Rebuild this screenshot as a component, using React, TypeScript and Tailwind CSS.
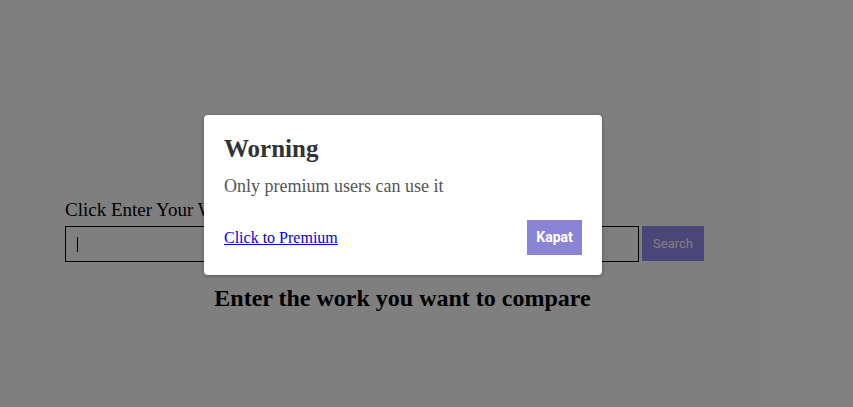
export default function App() {
  return (
    <div className="relative h-[407px] w-full overflow-hidden bg-white font-['Liberation_Serif',serif] text-black">
      <main className="w-[740px] pl-[65px] pt-[199px]">
        <label htmlFor="work" className="block text-[19px] leading-[22px]">
          Click Enter Your Work Name
        </label>
        <div className="mt-[5px] flex gap-[3px]">
          <div className="flex h-[36px] w-[574px] shrink-0 items-center border border-black pl-[11px]">
            <span className="h-[15px] w-px bg-black" />
          </div>
          <button className="h-[35px] w-[62px] shrink-0 bg-[#968cf0] font-['Roboto',sans-serif] text-[13px] text-white">
            Search
          </button>
        </div>
        <h2 className="mt-[22px] text-center text-[24px] font-bold leading-[28px]">
          Enter the work you want to compare
        </h2>
      </main>

      {/* modal overlay */}
      <div className="absolute inset-0 bg-black/50" />
      <div className="absolute left-[204px] top-[115px] flex w-[398px] flex-col rounded-[4px] bg-white px-[20px] pb-[20px] pt-[19px] shadow-[0_1px_4px_rgba(0,0,0,0.3)]">
        <h3 className="text-[25px] font-bold leading-[30px] text-[#333]">Worning</h3>
        <p className="mt-[12px] text-[18px] leading-[21px] text-[#555]">Only premium users can use it</p>
        <div className="mt-[23px] flex items-center justify-between">
          <a href="#" className="text-[16px] leading-[20px] text-[#0000ee] underline">
            Click to Premium
          </a>
          <button className="h-[35px] w-[55px] bg-[#8a84d6] font-['Roboto',sans-serif] text-[14px] font-bold text-white">
            Kapat
          </button>
        </div>
      </div>
    </div>
  )
}
